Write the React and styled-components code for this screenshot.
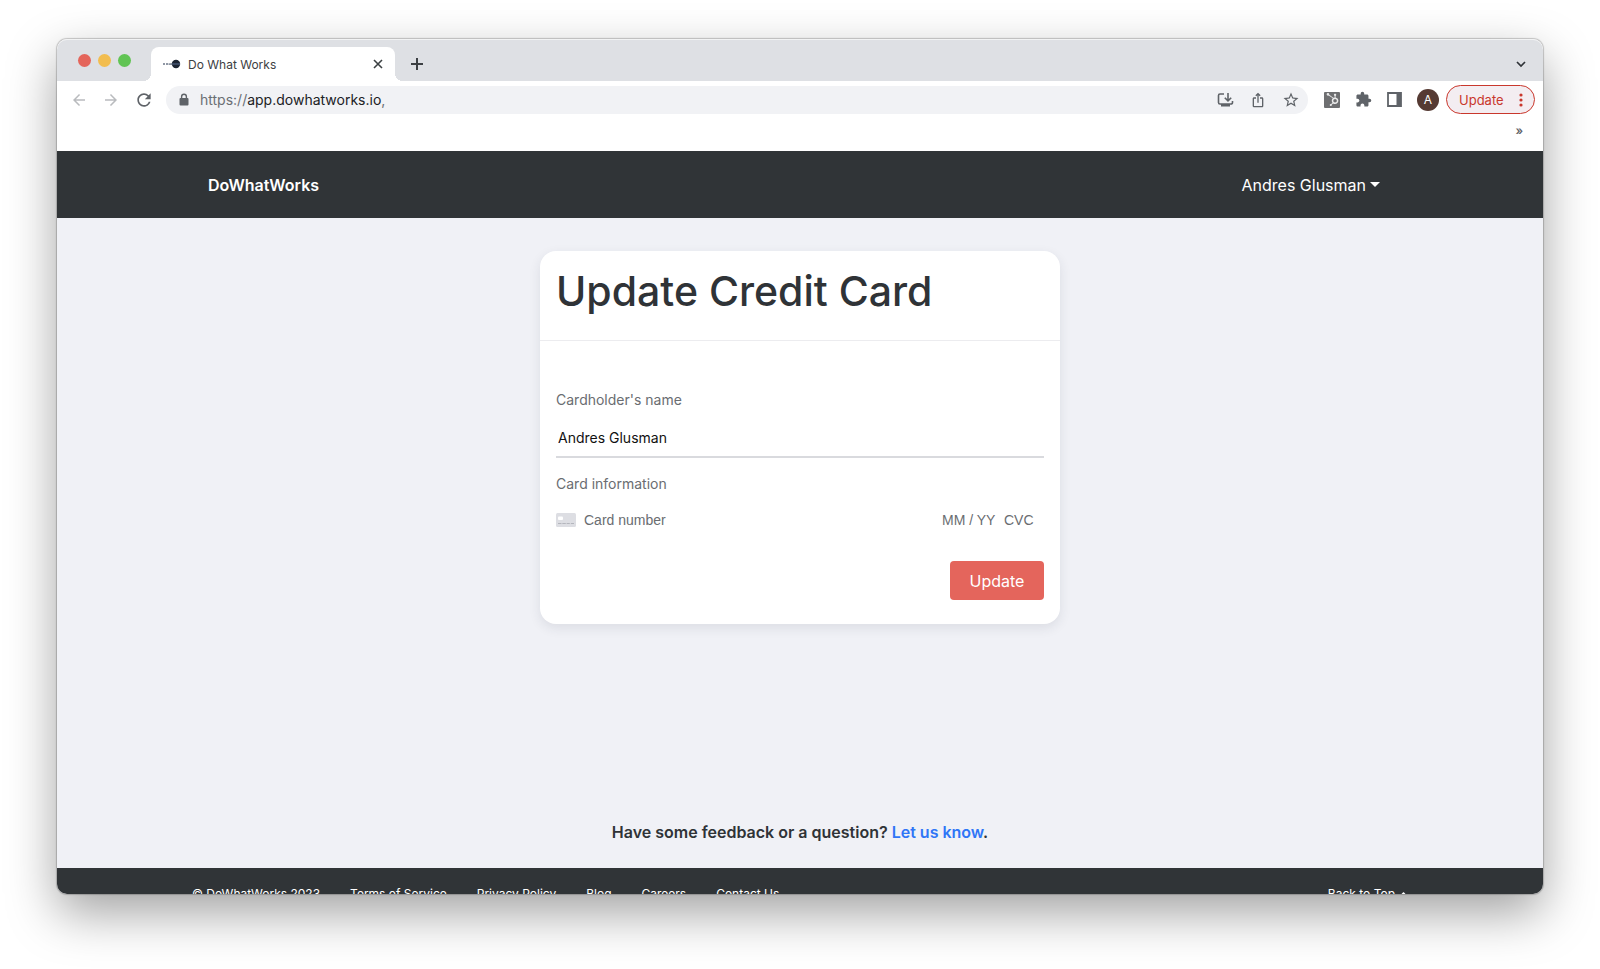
import React, { useState } from 'react'
import styled, { createGlobalStyle } from 'styled-components'
import {
  MdArrowBack,
  MdArrowForward,
  MdRefresh,
  MdIosShare,
  MdStarBorder,
  MdExtension,
} from 'react-icons/md'
import { FaHubspot, FaChevronUp } from 'react-icons/fa'

const GlobalStyle = createGlobalStyle`
  *, *::before, *::after {
    box-sizing: border-box;
  }
  body {
    margin: 0;
    background: #fff;
    color: #2f3337;
    font-family: Inter, 'Liberation Sans', sans-serif;
  }
  button, input {
    font-family: inherit;
  }
  a {
    color: inherit;
    text-decoration: none;
  }
`

const footerLinks = ['Terms of Service', 'Privacy Policy', 'Blog', 'Careers', 'Contact Us']

const Favicon = () => (
  <svg width="18" height="10" viewBox="0 0 18 10" aria-hidden="true">
    <path d="M0 5h2M3 5h2M5.500 5.200l4-.2" stroke="#6b7686" strokeWidth="1.300" />
    <circle cx="13" cy="5" r="4.200" fill="#1b2433" />
    <path d="M9 5h8" stroke="#5b6d92" strokeWidth="1" />
  </svg>
)

const CloseIcon = () => (
  <svg width="10" height="10" viewBox="0 0 10 10" aria-hidden="true">
    <path d="M1 1l8 8M9 1L1 9" stroke="#3c4043" strokeWidth="1.600" />
  </svg>
)

const PlusIcon = () => (
  <svg width="12" height="12" viewBox="0 0 12 12" aria-hidden="true">
    <path d="M6 0v12M0 6h12" stroke="#3c4043" strokeWidth="2" />
  </svg>
)

const ChevronIcon = () => (
  <svg width="10" height="8" viewBox="0 0 10 8" aria-hidden="true">
    <path d="M1 2l4 4 4-4" fill="none" stroke="#2f3337" strokeWidth="1.700" />
  </svg>
)

const LockIcon = () => (
  <svg width="12" height="13" viewBox="0 0 12 13" aria-hidden="true">
    <path d="M3.600 6V3.700a2.400 2.400 0 014.800 0V6" fill="none" stroke="#5f6368" strokeWidth="1.400" />
    <rect x="1.500" y="5" width="9" height="7.500" rx="1" fill="#5f6368" />
  </svg>
)

const InstallIcon = () => (
  <svg width="17" height="16" viewBox="0 0 17 16" aria-hidden="true">
    <path
      d="M7 2H3a1.500 1.500 0 00-1.500 1.500v7A1.500 1.500 0 003 12h11a1.500 1.500 0 001.500-1.500V9"
      fill="none"
      stroke="#5f6368"
      strokeWidth="1.600"
    />
    <path d="M4 12h9v2.500H4z" fill="#5f6368" />
    <path d="M11 1v7.500M7.800 5.700L11 8.900l3.200-3.200" fill="none" stroke="#5f6368" strokeWidth="1.600" />
  </svg>
)

const SidePanelIcon = () => (
  <svg width="15" height="15" viewBox="0 0 15 15" aria-hidden="true">
    <path d="M1 1h13v13H1z" fill="none" stroke="#5f6368" strokeWidth="1.800" />
    <path d="M9.500 1H14v13H9.500z" fill="#5f6368" />
  </svg>
)

const DotsIcon = () => (
  <svg width="4" height="14" viewBox="0 0 4 14" aria-hidden="true">
    <circle cx="2" cy="2" r="1.600" fill="#c9372c" />
    <circle cx="2" cy="7" r="1.600" fill="#c9372c" />
    <circle cx="2" cy="12" r="1.600" fill="#c9372c" />
  </svg>
)

const CardIcon = () => (
  <svg width="20" height="14" viewBox="0 0 20 14" aria-hidden="true">
    <rect width="20" height="14" rx="1.500" fill="#dddee3" />
    <rect x="2" y="3.500" width="5" height="3.500" rx="1" fill="#fff" />
    <path d="M2 10.500h3.500M6.300 10.500h3.500M10.600 10.500h3.200M14.800 10.500h3.200" stroke="#b4b6bd" />
  </svg>
)

const BrowserTabs = () => (
  <Tabs>
    <Lights>
      <Light $color="#e4655b" />
      <Light $color="#f2bd4f" />
      <Light $color="#61c454" />
    </Lights>
    <Tab>
      <Favicon />
      <TabTitle>Do What Works</TabTitle>
      <PlainButton aria-label="Close tab">
        <CloseIcon />
      </PlainButton>
    </Tab>
    <PlainButton aria-label="New tab">
      <PlusIcon />
    </PlainButton>
    <Spacer />
    <PlainButton aria-label="Search tabs">
      <ChevronIcon />
    </PlainButton>
  </Tabs>
)

const BrowserToolbar = () => (
  <Toolbar>
    <NavButtons>
      <PlainButton aria-label="Back" $faded>
        <MdArrowBack size={18} />
      </PlainButton>
      <PlainButton aria-label="Forward" $faded>
        <MdArrowForward size={18} />
      </PlainButton>
      <PlainButton aria-label="Reload">
        <MdRefresh size={20} />
      </PlainButton>
    </NavButtons>
    <AddressBar>
      <LockIcon />
      <Url>
        <span>https://</span>app.dowhatworks.io<span>,</span>
      </Url>
      <AddressActions>
        <PlainButton aria-label="Install">
          <InstallIcon />
        </PlainButton>
        <PlainButton aria-label="Share">
          <MdIosShare size={16} />
        </PlainButton>
        <PlainButton aria-label="Bookmark">
          <MdStarBorder size={18} />
        </PlainButton>
      </AddressActions>
    </AddressBar>
    <Extensions>
      <HubspotButton aria-label="HubSpot">
        <HubspotMark size={13} />
      </HubspotButton>
      <PlainButton aria-label="Extensions">
        <MdExtension size={17} />
      </PlainButton>
      <PlainButton aria-label="Side panel">
        <SidePanelIcon />
      </PlainButton>
      <Avatar>A</Avatar>
    </Extensions>
    <UpdateChip>
      Update
      <DotsIcon />
    </UpdateChip>
  </Toolbar>
)

const CreditCardForm = () => {
  const [name, setName] = useState('Andres Glusman')

  return (
    <Card>
      <CardHeader>
        <Title>Update Credit Card</Title>
      </CardHeader>
      <Form onSubmit={(e) => e.preventDefault()}>
        <Label htmlFor="cardholder">Cardholder's name</Label>
        <NameInput id="cardholder" value={name} onChange={(e) => setName(e.target.value)} />
        <Label htmlFor="card-number">Card information</Label>
        <CardFields>
          <CardIcon />
          <CardInput id="card-number" placeholder="Card number" />
          <CardInput aria-label="Expiration date" placeholder="MM / YY" $width="62px" />
          <CardInput aria-label="CVC" placeholder="CVC" $width="48px" />
        </CardFields>
        <SubmitButton type="submit">Update</SubmitButton>
      </Form>
    </Card>
  )
}

const App = () => (
  <>
    <GlobalStyle />
    <Desktop>
      <Window>
        <BrowserTabs />
        <BrowserToolbar />
        <BookmarksBar>
          <MoreButton aria-label="More bookmarks">»</MoreButton>
        </BookmarksBar>
        <Page>
          <Header>
            <HeaderInner>
              <Brand href="#">DoWhatWorks</Brand>
              <UserMenu>
                Andres Glusman
                <Caret />
              </UserMenu>
            </HeaderInner>
          </Header>
          <Main>
            <CreditCardForm />
            <Feedback>
              Have some feedback or a question? <FeedbackLink href="#">Let us know</FeedbackLink>.
            </Feedback>
          </Main>
          <Footer>
            <FooterInner>
              <span>© DoWhatWorks 2023</span>
              {footerLinks.map((link) => (
                <a key={link} href="#">
                  {link}
                </a>
              ))}
              <BackToTop href="#">
                Back to Top <FaChevronUp size={9} />
              </BackToTop>
            </FooterInner>
          </Footer>
        </Page>
      </Window>
    </Desktop>
  </>
)

const Desktop = styled.div`
  display: flex;
  height: 100vh;
  padding: 39px 57px 75px;
`
const Window = styled.div`
  flex: 1;
  display: flex;
  flex-direction: column;
  min-width: 0;
  overflow: hidden;
  border-radius: 10px;
  background: #fff;
  box-shadow: 0 0 1px 1px rgba(0, 0, 0, 0.2), 0 19px 50px rgba(0, 0, 0, 0.37);
`
const Spacer = styled.div`
  flex: 1;
`
const PlainButton = styled.button`
  display: flex;
  align-items: center;
  justify-content: center;
  padding: 0;
  border: 0;
  background: none;
  color: ${({ $faded }) => ($faded ? '#b9bbbe' : '#5f6368')};
`
const Tabs = styled.div`
  flex: none;
  display: flex;
  align-items: center;
  height: 42px;
  padding: 8px 17px 0 21px;
  border-radius: 10px 10px 0 0;
  background: #dee0e4;
  box-shadow: inset 0 1px rgba(255, 255, 255, 0.6);
`
const Lights = styled.div`
  display: flex;
  gap: 7px;
  margin-right: 20px;
  padding-bottom: 8px;
`
const Light = styled.span`
  width: 13px;
  height: 13px;
  border-radius: 50%;
  background: ${({ $color }) => $color};
`
const Tab = styled.div`
  position: relative;
  display: flex;
  align-items: center;
  gap: 7px;
  width: 244px;
  height: 34px;
  margin-right: 16px;
  padding: 0 12px;
  border-radius: 8px 8px 0 0;
  background: #fff;

  &::before,
  &::after {
    content: '';
    position: absolute;
    bottom: 0;
    width: 8px;
    height: 8px;
  }
  &::before {
    right: 100%;
    background: radial-gradient(circle at 0 0, transparent 8px, #fff 8px);
  }
  &::after {
    left: 100%;
    background: radial-gradient(circle at 100% 0, transparent 8px, #fff 8px);
  }
`
const TabTitle = styled.span`
  flex: 1;
  color: #3c4043;
  font-size: 12px;
`
const Toolbar = styled.div`
  flex: none;
  display: flex;
  align-items: center;
  height: 37px;
  padding: 0 8px 0 13px;
`
const NavButtons = styled.div`
  display: flex;
  gap: 14px;
  margin-right: 12px;
`
const AddressBar = styled.div`
  flex: 1;
  display: flex;
  align-items: center;
  height: 28px;
  padding: 0 8px 0 12px;
  border-radius: 14px;
  background: #f1f2f5;
`
const Url = styled.span`
  flex: 1;
  margin-left: 10px;
  color: #202124;
  font-size: 14px;

  span {
    color: #6b6f74;
  }
`
const AddressActions = styled.div`
  display: flex;
  gap: 16px;
`
const Extensions = styled.div`
  display: flex;
  align-items: center;
  gap: 15px;
  margin: 0 7px 0 16px;
`
const HubspotButton = styled(PlainButton)`
  width: 16px;
  height: 16px;
  border-radius: 1px;
  background: #6e6f71;
  color: #fff;
`
const HubspotMark = styled(FaHubspot)`
  opacity: 0.85;
`
const Avatar = styled.button`
  width: 22px;
  height: 22px;
  padding: 0;
  border: 0;
  border-radius: 50%;
  background: #553a33;
  color: #fff;
  font-size: 12px;
`
const UpdateChip = styled.button`
  display: flex;
  align-items: center;
  justify-content: space-between;
  width: 89px;
  height: 29px;
  padding: 0 11px 0 12px;
  border: 1px solid #c9372c;
  border-radius: 15px;
  background: #f3edf1;
  color: #c9372c;
  font-size: 13px;
`
const BookmarksBar = styled.div`
  flex: none;
  display: flex;
  justify-content: flex-end;
  height: 33px;
  padding: 0 20px 8px;
`
const MoreButton = styled(PlainButton)`
  font-size: 12px;
  font-weight: 600;
`
const Page = styled.div`
  flex: 1;
  min-height: 0;
  overflow: hidden;
  background: #f0f1f6;
`
const Header = styled.header`
  background: #303437;
  color: #fff;
`
const HeaderInner = styled.div`
  display: flex;
  align-items: center;
  justify-content: space-between;
  max-width: 1216px;
  height: 67px;
  margin: 0 auto;
  padding: 0 28px 0 16px;
`
const Brand = styled.a`
  font-size: 16px;
  font-weight: 600;
`
const UserMenu = styled.button`
  display: flex;
  align-items: center;
  gap: 4px;
  padding: 0;
  border: 0;
  background: none;
  color: #fff;
  font-size: 16px;
`
const Caret = styled.span`
  border: 5px solid transparent;
  border-top-color: #fff;
  border-bottom: 0;
`
const Main = styled.main`
  display: flex;
  flex-direction: column;
  align-items: center;
  padding: 33px 16px 24px;
`
const Card = styled.section`
  width: 100%;
  max-width: 520px;
  border-radius: 16px;
  background: #fff;
  box-shadow: 0 4px 12px rgba(40, 50, 70, 0.1);
`
const CardHeader = styled.header`
  padding: 16px 16px 24px;
  border-bottom: 1px solid #ececef;
`
const Title = styled.h1`
  margin: 0;
  font-size: 41px;
  font-weight: 500;
  line-height: 48px;
  padding-bottom: 1px;
`
const Form = styled.form`
  display: flex;
  flex-direction: column;
  padding: 47px 16px 24px;
`
const Label = styled.label`
  color: #6a6d71;
  font-size: 14px;
  line-height: 24px;
`
const NameInput = styled.input`
  height: 46px;
  margin-bottom: 14px;
  padding: 10px 2px 4px;
  border: 0;
  border-bottom: 2px solid #d9dade;
  background: none;
  color: #111;
  font-size: 14px;
  outline: none;
`
const CardFields = styled.div`
  display: flex;
  align-items: center;
  height: 48px;
  margin-bottom: 17px;
`
const CardInput = styled.input`
  flex: ${({ $width }) => ($width ? 'none' : '1')};
  width: ${({ $width }) => $width || 'auto'};
  min-width: 0;
  padding: 0 0 0 8px;
  border: 0;
  background: none;
  font-family: 'Liberation Sans', Arial, sans-serif;
  font-size: 14px;
  outline: none;

  &::placeholder {
    color: #6a6d71;
    opacity: 1;
  }
`
const SubmitButton = styled.button`
  align-self: flex-end;
  width: 94px;
  height: 39px;
  border: 0;
  border-radius: 4px;
  background: #e4655c;
  color: #fff;
  font-size: 16px;
`
const Feedback = styled.p`
  margin: 196px 0 0;
  font-size: 16px;
  font-weight: 600;
  line-height: 24px;
`
const FeedbackLink = styled.a`
  color: #2f76f6;
`
const Footer = styled.footer`
  background: #303437;
  color: #fff;
  font-size: 12px;
`
const FooterInner = styled.div`
  display: flex;
  gap: 30px;
  max-width: 1216px;
  margin: 0 auto;
  padding: 18px 0;
  line-height: 16px;
`
const BackToTop = styled.a`
  display: flex;
  align-items: center;
  gap: 4px;
  margin-left: auto;
`

export default App
